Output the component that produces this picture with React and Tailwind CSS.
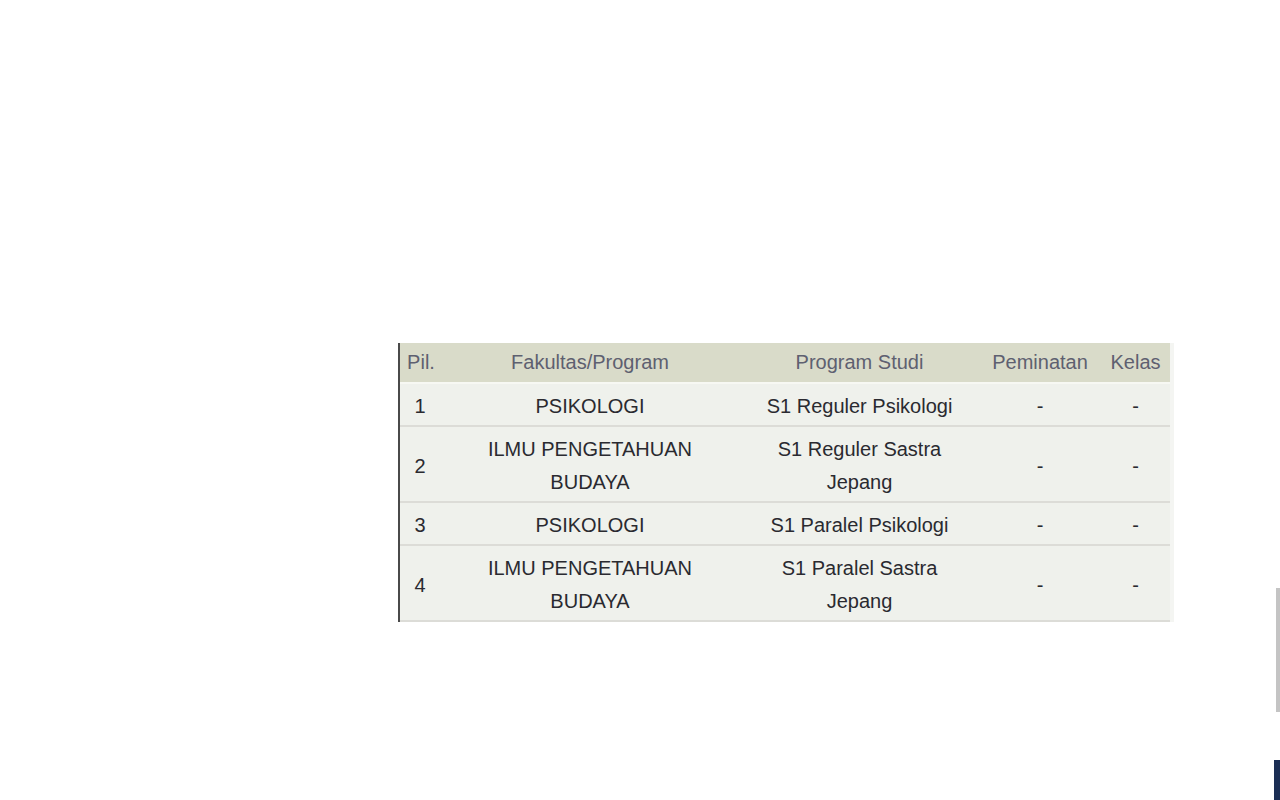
const rows = [
  { no: "1", fak: ["PSIKOLOGI"], prodi: ["S1 Reguler Psikologi"] },
  { no: "2", fak: ["ILMU PENGETAHUAN", "BUDAYA"], prodi: ["S1 Reguler Sastra", "Jepang"] },
  { no: "3", fak: ["PSIKOLOGI"], prodi: ["S1 Paralel Psikologi"] },
  { no: "4", fak: ["ILMU PENGETAHUAN", "BUDAYA"], prodi: ["S1 Paralel Sastra", "Jepang"] },
];

const Lines = ({ items }) => (
  <>
    {items.map((t, i) => (
      <div key={i}>{t}</div>
    ))}
  </>
);

export default function App() {
  return (
    <div
      className="relative w-[1280px] h-[800px] overflow-hidden bg-white"
      style={{ fontFamily: '"Liberation Sans", Arial, sans-serif' }}
    >
      <div className="pt-[343px] pl-[398px]">
        <div className="flex w-fit border-l-2 border-[#4a4a4a]">
          <table className="table-fixed w-[770px] border-collapse text-[20px] leading-[33px]">
            <colgroup>
              <col className="w-[40px]" />
              <col className="w-[300px]" />
              <col className="w-[239px]" />
              <col className="w-[122px]" />
              <col className="w-[69px]" />
            </colgroup>
            <thead>
              <tr className="bg-[#d9dbc9] text-[#5e6070] border-b-2 border-[#f7f8f3]">
                <th className="font-normal text-center pt-[3px] pb-[3px] pl-[2px]">Pil.</th>
                <th className="font-normal text-center pt-[3px] pb-[3px]">Fakultas/Program</th>
                <th className="font-normal text-center pt-[3px] pb-[3px]">Program Studi</th>
                <th className="font-normal text-center pt-[3px] pb-[3px]">Peminatan</th>
                <th className="font-normal text-center pt-[3px] pb-[3px]">Kelas</th>
              </tr>
            </thead>
            <tbody>
              {rows.map((r) => (
                <tr key={r.no} className="bg-[#eff1ec] text-[#2a2a30] border-b-2 border-[#dcdcd7]">
                  <td className="text-center align-middle pt-[6px] pb-[2px]">{r.no}</td>
                  <td className="text-center align-middle pt-[6px] pb-[2px]">
                    <Lines items={r.fak} />
                  </td>
                  <td className="text-center align-middle pt-[6px] pb-[2px]">
                    <Lines items={r.prodi} />
                  </td>
                  <td className="text-center align-middle pt-[6px] pb-[2px]">-</td>
                  <td className="text-center align-middle pt-[6px] pb-[2px]">-</td>
                </tr>
              ))}
            </tbody>
          </table>
          <div className="w-[4px] bg-[#f4f5f2]"></div>
        </div>
      </div>

      {/* window edge scrollbar remnants */}
      <div className="absolute right-0 top-[588px] w-[4px] h-[124px] bg-[#c4c4c4]"></div>
      <div className="absolute right-0 top-[760px] w-[6px] h-[40px] bg-[#1c2f55]"></div>
    </div>
  );
}
